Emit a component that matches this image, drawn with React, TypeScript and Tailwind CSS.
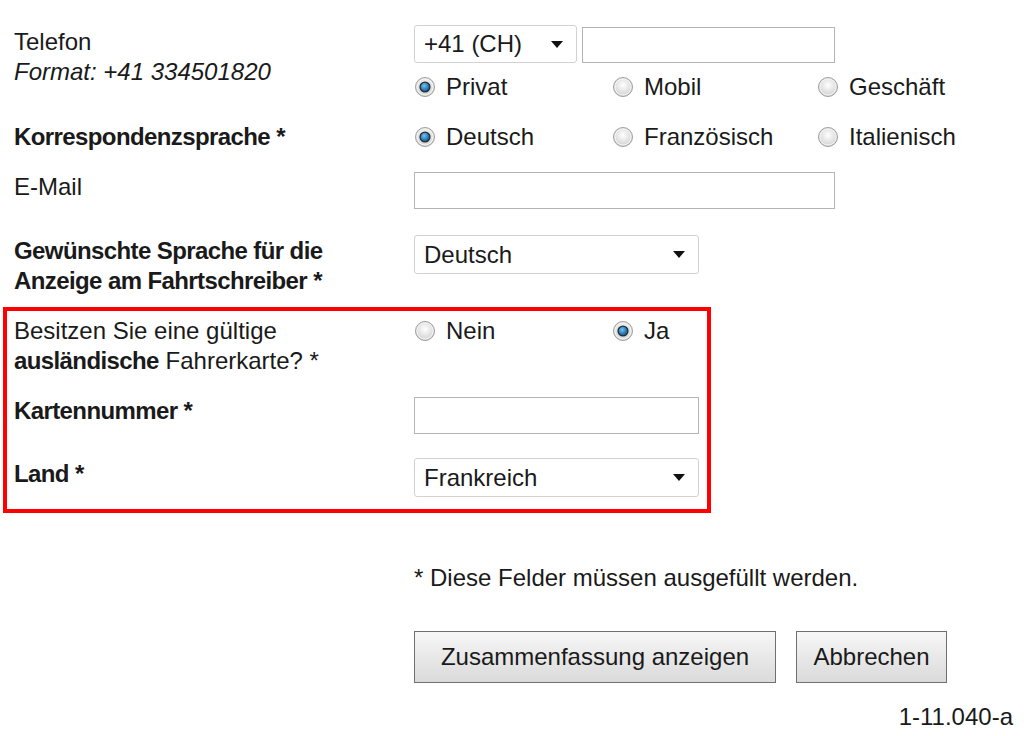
import React from 'react';

const font = { fontFamily: '"Liberation Sans", Arial, sans-serif' };

function Radio({ checked }: { checked?: boolean }) {
  return (
    <svg width="22" height="22" viewBox="0 0 22 22" className="shrink-0">
      <defs>
        <radialGradient id="rg" cx="50%" cy="40%" r="60%">
          <stop offset="0%" stopColor="#ffffff" />
          <stop offset="100%" stopColor="#cfcfcf" />
        </radialGradient>
        <radialGradient id="blue" cx="40%" cy="35%" r="70%">
          <stop offset="0%" stopColor="#6fc3f5" />
          <stop offset="100%" stopColor="#0a5a9c" />
        </radialGradient>
      </defs>
      <circle cx="11" cy="11" r="9.5" fill="url(#rg)" stroke="#a0a0a0" strokeWidth="1" />
      <circle cx="11" cy="11" r="8" fill="none" stroke="#f4f4f4" strokeWidth="1" />
      {checked && (
        <>
          <circle cx="11" cy="11" r="5.6" fill="#2a2a2a" />
          <circle cx="11" cy="11" r="4.3" fill="url(#blue)" />
        </>
      )}
    </svg>
  );
}

function Option({ label, checked, width }: { label: string; checked?: boolean; width: string }) {
  return (
    <div className={`flex items-center gap-[10px] h-[30px] ${width}`}>
      <Radio checked={checked} />
      <span>{label}</span>
    </div>
  );
}

function Select({ value, className }: { value: string; className: string }) {
  return (
    <div
      className={`flex items-center justify-between bg-white border border-[#d2d2d2] rounded-[3px] pl-[9px] pr-[13px] shrink-0 ${className}`}
    >
      <span>{value}</span>
      <svg width="12" height="7" viewBox="0 0 12 7">
        <path d="M0 0 L12 0 L6 7 Z" fill="#111" />
      </svg>
    </div>
  );
}

export default function App() {
  return (
    <div className="w-[1024px] h-[736px] bg-white text-[#1a1a1a] text-[24px] leading-[30px] relative overflow-hidden" style={font}>
      <div className="pt-[25px]">
        {/* Telefon */}
        <div className="flex pl-[14px]">
          <div className="w-[400px] shrink-0 pt-[2px]">
            <div>Telefon</div>
            <div className="italic">Format: +41 334501820</div>
          </div>
          <div>
            <div className="flex gap-[5px] items-start">
              <Select value="+41 (CH)" className="w-[163px] h-[38px]" />
              <div className="w-[253px] h-[36px] mt-[2px] border border-[#b4b4b4] bg-white" />
            </div>
            <div className="flex mt-[9px]">
              <Option label="Privat" checked width="w-[198px]" />
              <Option label="Mobil" width="w-[205px]" />
              <Option label="Geschäft" width="w-[150px]" />
            </div>
          </div>
        </div>

        {/* Korrespondenzsprache */}
        <div className="flex pl-[14px] mt-[20px]">
          <div className="w-[400px] shrink-0 font-bold tracking-[-0.6px]">Korrespondenzsprache *</div>
          <div className="flex">
            <Option label="Deutsch" checked width="w-[198px]" />
            <Option label="Französisch" width="w-[205px]" />
            <Option label="Italienisch" width="w-[150px]" />
          </div>
        </div>

        {/* E-Mail */}
        <div className="flex pl-[14px] mt-[20px]">
          <div className="w-[400px] shrink-0">E-Mail</div>
          <div className="w-[421px] h-[37px] border border-[#b4b4b4] bg-white" />
        </div>

        {/* Sprache Fahrtschreiber */}
        <div className="flex pl-[14px] mt-[26px]">
          <div className="w-[400px] shrink-0 font-bold tracking-[-0.6px] pt-[1px]">
            <div>Gewünschte Sprache für die</div>
            <div>Anzeige am Fahrtschreiber *</div>
          </div>
          <Select value="Deutsch" className="w-[285px] h-[39px]" />
        </div>

        {/* Highlighted box */}
        <div className="ml-[3px] mt-[11px] w-[708px] border-[4px] border-[#ff0000] pl-[7px] pr-[8px] pt-[5px] pb-[12px]">
          <div className="flex items-start">
            <div className="w-[400px] shrink-0">
              <div>Besitzen Sie eine gültige</div>
              <div>
                <span className="font-bold tracking-[-0.6px]">ausländische</span> Fahrerkarte? *
              </div>
            </div>
            <div className="flex">
              <Option label="Nein" width="w-[198px]" />
              <Option label="Ja" checked width="w-[80px]" />
            </div>
          </div>
          <div className="flex mt-[21px] items-start">
            <div className="w-[400px] shrink-0 font-bold tracking-[-0.6px] -mt-[1px]">Kartennummer *</div>
            <div className="w-[285px] h-[37px] border border-[#b4b4b4] bg-white shrink-0" />
          </div>
          <div className="flex mt-[24px] items-start">
            <div className="w-[400px] shrink-0 font-bold tracking-[-0.6px] pt-[1px]">Land *</div>
            <Select value="Frankreich" className="w-[285px] h-[39px]" />
          </div>
        </div>

        {/* Note */}
        <div className="pl-[414px] mt-[50px]">* Diese Felder müssen ausgefüllt werden.</div>

        {/* Buttons */}
        <div className="pl-[414px] mt-[38px] flex gap-[20px]">
          <button className="w-[362px] h-[52px] border border-[#707070] bg-gradient-to-b from-[#f7f7f7] to-[#dadada] text-[24px]">
            Zusammenfassung anzeigen
          </button>
          <button className="w-[151px] h-[52px] border border-[#707070] bg-gradient-to-b from-[#f7f7f7] to-[#dadada] text-[24px]">
            Abbrechen
          </button>
        </div>

        {/* Footer */}
        <div className="text-right pr-[11px] mt-[19px]">1-11.040-a</div>
      </div>
    </div>
  );
}
